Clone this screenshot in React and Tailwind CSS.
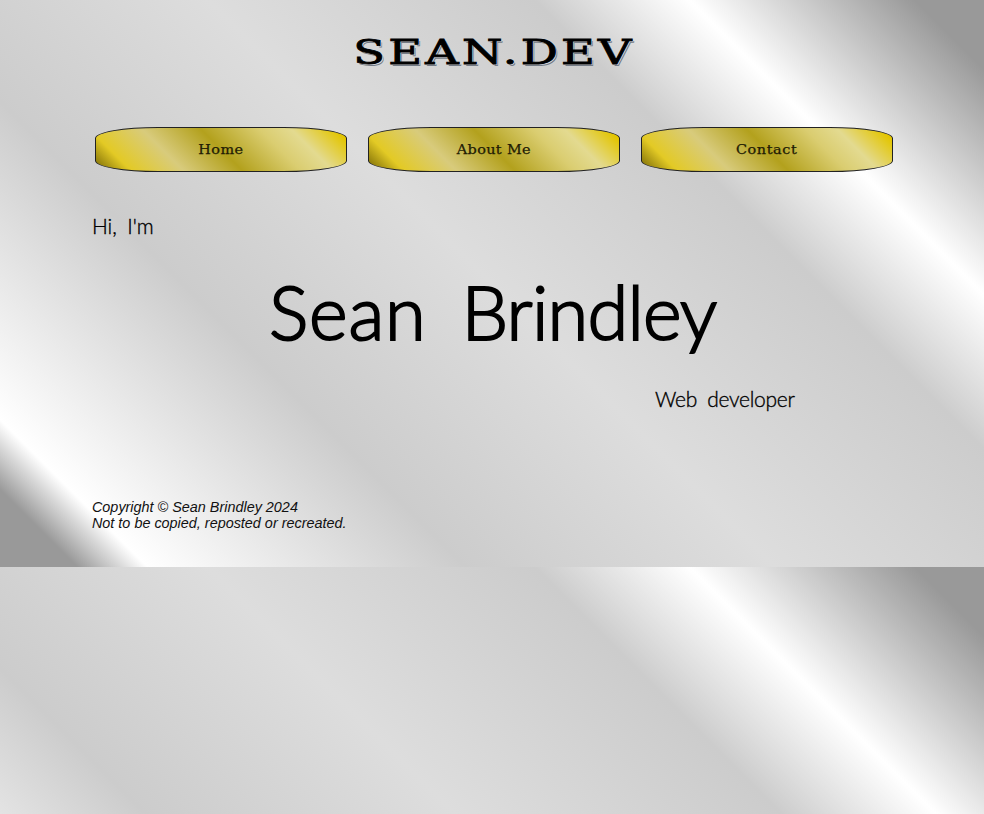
const links = [
  { label: "Home", spacing: "tracking-[0.4px]" },
  { label: "About Me", spacing: "tracking-[0.3px]" },
  { label: "Contact", spacing: "tracking-[0.5px]" },
];

function NavButton({ label, spacing }) {
  return (
    <a
      href="#"
      className="flex h-[45px] w-[252px] shrink-0 items-center justify-center rounded-[25%] border border-[#222] bg-[linear-gradient(45deg,#8f7d0c_3%,#e3ca25_12%,#d8cb7c_30%,#b3a11d_50%,#dacd70_70%,#e3da90_81%,#e3c500_96%)] font-['DejaVu_Serif',serif] text-[12px] font-normal text-[#221c04] [-webkit-text-stroke:0.25px_#221c04]"
    >
      <span className={`inline-block scale-x-[1.2] ${spacing}`}>{label}</span>
    </a>
  );
}

export default function App() {
  return (
    <div className="h-[814px] w-full overflow-hidden bg-[linear-gradient(45deg,#999_5%,#fff_9.5%,#ccc_30%,#ddd_50%,#ccc_71%,#fff_81%,#999_95.5%)] bg-[length:100%_567px] text-black">
      <div className="flex h-[567px] flex-col px-[91px]">
        <header className="flex h-[127px] justify-center pt-8">
          <h1 className="h-10 origin-center scale-x-[1.36] pl-[3px] font-['DejaVu_Serif',serif] text-[34px] leading-10 tracking-[2.4px] whitespace-nowrap [-webkit-text-stroke:0.9px_black] [text-shadow:1px_1px_0_#d8dade,1.5px_2px_0_#737b86]">
            SEAN.DEV
          </h1>
        </header>
        <nav className="flex gap-[21px] pl-1">
          {links.map((link) => (
            <NavButton key={link.label} label={link.label} spacing={link.spacing} />
          ))}
        </nav>
        <main className="flex flex-col pl-px font-['Lato',sans-serif] font-light">
          <p className="mt-[39px] h-[30px] text-[21px] leading-[30px] tracking-[-0.1px] [word-spacing:5px] [-webkit-text-stroke:0.35px_black]">Hi, I'm</p>
          <h2 className="mt-[21px] flex h-[100px] pl-[177px] text-[74px] leading-[100px] font-light whitespace-nowrap [-webkit-text-stroke:2px_black]">
            <span className="tracking-[0.8px]">Sean</span>
            <span className="ml-[35px] tracking-[-0.8px]">Brindley</span>
          </h2>
          <p className="mt-[22px] h-[30px] pl-[563px] text-[21px] leading-[30px] tracking-[-0.3px] [word-spacing:5px] [-webkit-text-stroke:0.35px_black]">Web developer</p>
        </main>
        <footer className="mt-[85px] w-fit origin-left scale-x-[0.96] pl-px font-['Liberation_Sans',Arial,sans-serif] text-[15px] leading-4 whitespace-nowrap text-[#111] italic">
          <p>Copyright © Sean Brindley 2024</p>
          <p>Not to be copied, reposted or recreated.</p>
        </footer>
      </div>
    </div>
  );
}
